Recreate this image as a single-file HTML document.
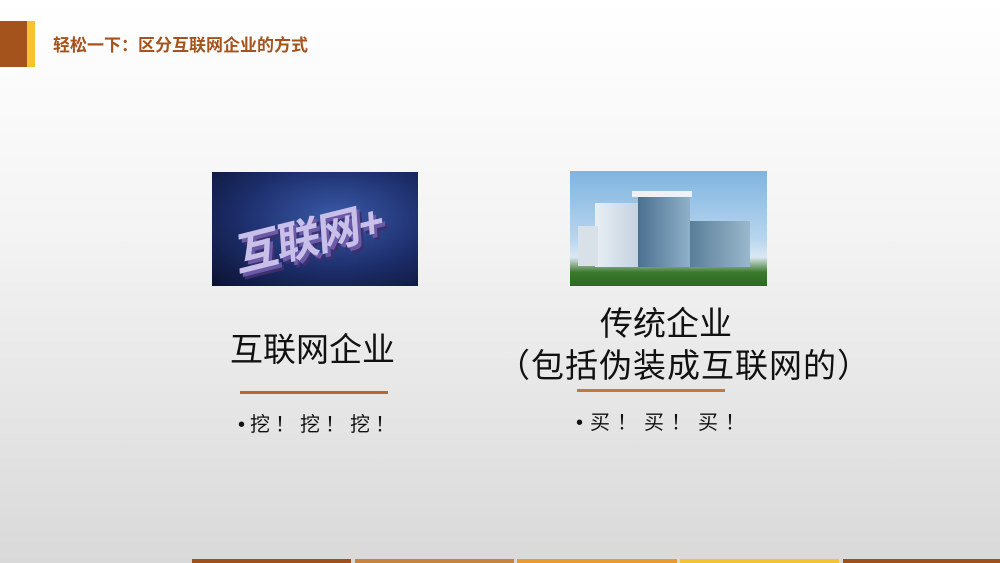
<!DOCTYPE html>
<html><head><meta charset="utf-8"><style>
body{margin:0;width:1000px;height:563px;overflow:hidden;position:relative;background:linear-gradient(#fff 0%,#f4f4f4 40%,#d9d9d9 100%);font-family:"Liberation Sans","Noto Sans CJK SC",sans-serif}
div{position:absolute}
.t{white-space:nowrap;color:#111}
</style></head><body>
<div style="left:0;top:21px;width:27px;height:46px;background:#a4531d"></div>
<div style="left:27px;top:21px;width:8px;height:46px;background:#f8c12f"></div>
<div class="t" style="left:53px;top:35px;font-size:17px;font-weight:bold;color:#a4531d;line-height:22px">轻松一下：区分互联网企业的方式</div>

<div style="left:212px;top:172px;width:206px;height:114px;background:radial-gradient(ellipse at 60% 40%,#3a5aa8 0%,#1c2d6a 55%,#0b1230 100%);overflow:hidden">
<div class="t" style="left:22px;top:30px;font-size:44px;font-weight:bold;color:#c9c0ea;transform:rotate(-14deg) skewX(-10deg);text-shadow:3px 4px 0 #6a5aa8,5px 7px 0 #3b2f6e;letter-spacing:-2px">互联网+</div>
</div>

<div style="left:570px;top:171px;width:197px;height:115px;background:linear-gradient(#7fb4e0 0%,#b9d6ef 60%,#dbe8f2 75%,#3c7a2c 88%,#2a6a22 100%);overflow:hidden">
<div style="left:25px;top:32px;width:60px;height:64px;background:linear-gradient(90deg,#e8eef4,#b8c8d8)"></div>
<div style="left:68px;top:22px;width:52px;height:74px;background:linear-gradient(90deg,#4a7090,#8fb0c8)"></div>
<div style="left:62px;top:20px;width:60px;height:6px;background:#eef2f6"></div>
<div style="left:120px;top:50px;width:60px;height:46px;background:linear-gradient(90deg,#5a7e98,#9ab8cc)"></div>
<div style="left:8px;top:55px;width:20px;height:40px;background:#d8e0e8"></div>
</div>

<div class="t" style="left:230px;top:328px;font-size:33px;line-height:44px">互联网企业</div>
<div style="left:240px;top:391px;width:148px;height:3px;background:#b5682f"></div>
<div class="t" style="left:238px;top:411px;font-size:20px;line-height:28px;letter-spacing:5px">•挖！挖！挖！</div>

<div class="t" style="left:600px;top:302px;font-size:33px;line-height:44px">传统企业</div>
<div class="t" style="left:497px;top:344px;font-size:33px;line-height:44px;letter-spacing:1px">（包括伪装成互联网的）</div>
<div style="left:577px;top:389px;width:148px;height:3px;background:#c07a40"></div>
<div class="t" style="left:576px;top:409px;font-size:20px;line-height:28px;letter-spacing:7px">•买！买！买！</div>

<div style="left:192px;top:559px;width:159px;height:4px;background:#a0501a"></div>
<div style="left:355px;top:559px;width:159px;height:4px;background:#c8843e"></div>
<div style="left:517px;top:559px;width:160px;height:4px;background:#eb9a2e"></div>
<div style="left:680px;top:559px;width:159px;height:4px;background:#f5c232"></div>
<div style="left:843px;top:559px;width:157px;height:4px;background:#a0501a"></div>
</body></html>
